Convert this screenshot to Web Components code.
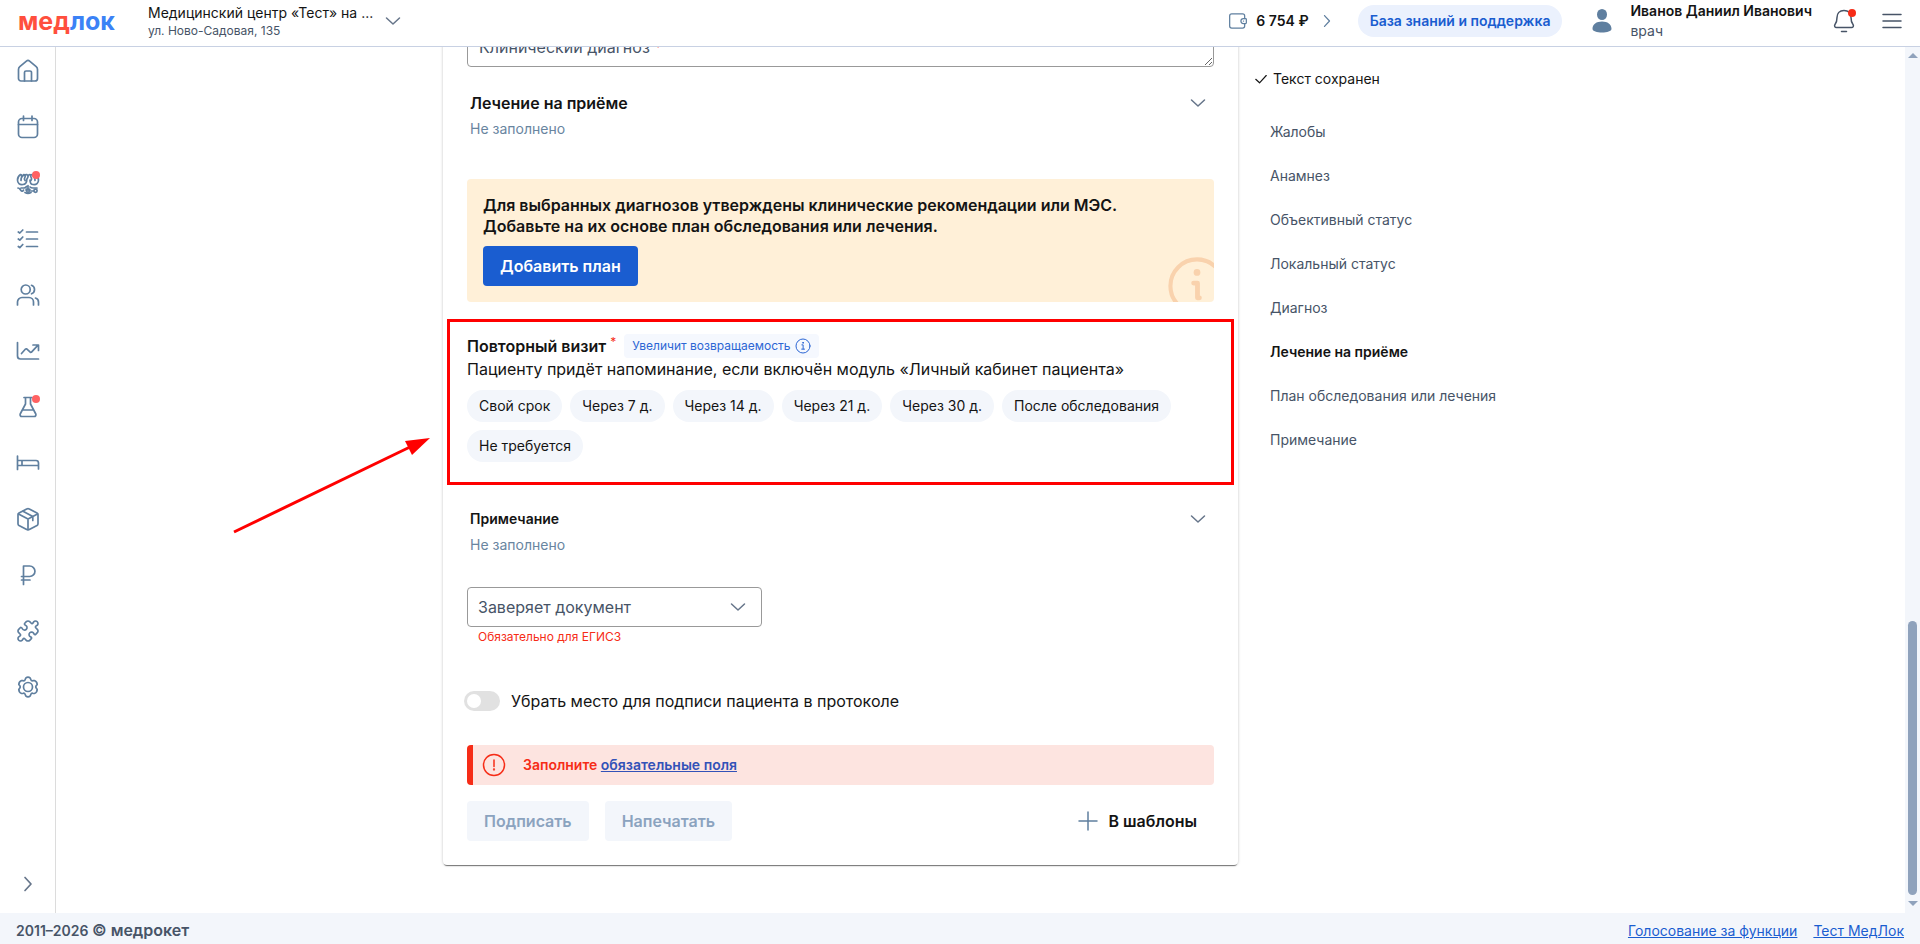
<!DOCTYPE html>
<html lang="ru">
<head>
<meta charset="utf-8">
<meta name="viewport" content="width=device-width, initial-scale=1">
<title>МедЛок</title>
<style>
    :root {
        --blue: #1a5dd0;
        --red: #f62c17;
        --steel: #5f7f9f;
        --slate: #475467;
        --chevron: #66758a;
        --pale: #f3f6fb;
        --mark: #ff0000;
    }
    html, body { height: 100%; }
    body {
        margin: 0;
        overflow: hidden;
        font: 14px/20px Inter, "Open Sans", sans-serif;
        color: #141414;
        background: #fff;
    }
</style>
</head>
<body>
<med-app></med-app>

<script>
const ICONS = {
    home: '<path d="M2.5 19.5V10.4c0-1.2.4-2 1.3-2.8l6.6-5.5c1-.8 2.2-.8 3.2 0l6.6 5.5c.9.8 1.3 1.6 1.3 2.8v9.1a2.5 2.5 0 0 1-2.5 2.5H5a2.5 2.5 0 0 1-2.5-2.5z"/><path d="M8.5 22v-8.500a1.500 1.500 0 0 1 1.500-1.500h4a1.500 1.500 0 0 1 1.500 1.500V22"/>',
    calendar: '<rect x="2.500" y="3.500" width="19" height="19" rx="3.500"/><path d="M2.500 9.500h19M7.500 1v4.500M16 1v4.500"/>',
    brain: '<path d="M7 13.500C3.500 14 1.500 12 1.500 9c0-2.500 1.200-4.300 3-5.500 1 .2 1.300.8 1 1.500M5 9.500c-.3-3 .9-4.300 3-6 1.500.2 1.700 1.200 1 2.500-.7 1.200-.8 2.500 0 3.500M8.500 4.500C10 3 12 3.500 12 5.500s-1.500 2-1.300 3.500c.3 2-1.200 4.500-3.700 4.500M17 13.500c3.500.5 5.500-1.500 5.500-4.500 0-2.500-1.200-4.300-3-5.500M19 9.500c.3-3-.9-4.300-3-6-1.500.2-1.700 1.200-1 2.500.7 1.200.8 2.500 0 3.500M12 5.500c.3-1.800 1.700-2.500 3-1.500M14 9c0 2.500 1 4.500 3 4.500"/><path d="M2 17c2 0 2 2 3.500 3 1 .5 1.700 0 2-1M5 17h3c1 0 2-.5 2.500-1.500M12 14.500v2.500M10 19c1-2 3-2 4 0M9 21.500c1.500.8 4.500.8 6 0M14 16c1 1 2 1 3 1h4"/><circle cx="12" cy="20" r="1.300"/><circle cx="19.500" cy="19.800" r="1.600"/><path d="M15 20h3"/>',
    list: '<path d="M10.500 5h11M10.500 12h11M10.500 19.500h11"/><path d="M2.300 5l1.500 1 3-3M2.300 12l1.500 1.200 3-3.200M2.300 19.500l1.500 1.200 3-3.200"/>',
    users: '<circle cx="9.700" cy="6.500" r="4.500"/><path d="M1.500 22v-3a4.500 4.500 0 0 1 4.500-4.500h7a4.500 4.500 0 0 1 4.500 4.500v3M15.500 2.300a4.500 4.500 0 0 1 0 8.500M19.500 15a4.300 4.300 0 0 1 3 4.200V22"/>',
    chart: '<path d="M1.500 3.500v13.500a3 3 0 0 0 3 3h18"/><path d="M5.500 14.500l4-4.500 1.200-.2 3.800 3.500 1-.1 6.500-7M17 6h5.500v5.500"/>',
    flask: '<path d="M8 2.500h8M9.500 2.500v6.500L4.200 19a1.800 1.800 0 0 0 1.600 2.500h12.400a1.800 1.800 0 0 0 1.600-2.500L14.500 9V2.500M7.500 15h9.500"/>',
    bed: '<path d="M1.500 5v13.500M1.500 14.500h21M1.500 9.500h18.500a2.500 2.500 0 0 1 2.500 2.500v6M6 9.500v5"/>',
    box: '<path d="M10.700 1.900a3 3 0 0 1 2.600 0l7.700 4.200a2 2 0 0 1 1 1.800v8.700a2 2 0 0 1-1 1.800l-7.700 4.200a3 3 0 0 1-2.600 0L3 18.400a2 2 0 0 1-1-1.800V7.900a2 2 0 0 1 1-1.800z"/><path d="M2.500 7l9.500 5 9.500-5M12 12v10.500M7 4.200l9.800 5.300v4"/>',
    ruble: '<path d="M7.500 21.500V3h6.200a5 5 0 0 1 0 10.500H5.500M5.500 17h8.500"/>',
    puzzle: '<path d="M19.439 7.850c-.049.322.059.648.289.878l1.568 1.568c.470.470.706 1.087.706 1.704s-.235 1.233-.706 1.704l-1.611 1.611a.980.980 0 0 1-.837.276c-.470-.070-.802-.480-.968-.925a2.501 2.501 0 1 0-3.214 3.214c.446.166.855.497.925.968a.979.979 0 0 1-.276.837l-1.610 1.610a2.404 2.404 0 0 1-1.705.707 2.402 2.402 0 0 1-1.704-.706l-1.568-1.568a1.026 1.026 0 0 0-.877-.290c-.493.074-.840.504-1.020.968a2.500 2.500 0 1 1-3.237-3.237c.464-.180.894-.527.967-1.020a1.026 1.026 0 0 0-.289-.877l-1.568-1.568A2.402 2.402 0 0 1 1.998 12c0-.617.236-1.234.706-1.704L4.230 8.770c.240-.240.581-.353.917-.303.515.077.877.528 1.073 1.010a2.500 2.500 0 1 0 3.259-3.259c-.482-.196-.933-.558-1.010-1.073-.050-.336.062-.676.303-.917l1.525-1.525A2.402 2.402 0 0 1 12 1.998c.617 0 1.234.236 1.704.706l1.568 1.568c.230.230.556.338.877.290.493-.074.840-.504 1.020-.968a2.500 2.500 0 1 1 3.237 3.237c-.464.180-.894.527-.967 1.020Z"/>',
    gear: '<circle cx="12" cy="12" r="4.500"/><path d="M9.700 2.200c1.400-1.200 3.200-1.200 4.600 0l.6 1.500c.3.800 1.100 1.200 1.900 1l1.600-.2c1.800.6 2.700 2.100 2.800 4l-1 1.300c-.5.700-.5 1.600 0 2.300l1 1.400c-.1 1.900-1 3.400-2.800 4l-1.600-.2c-.8-.2-1.600.2-1.900 1l-.6 1.500c-1.400 1.300-3.200 1.300-4.600 0l-.6-1.500c-.3-.8-1.100-1.200-1.900-1l-1.600.2c-1.800-.6-2.700-2.100-2.800-4l1-1.400c.5-.7.5-1.600 0-2.300l-1-1.300c.1-1.900 1-3.400 2.800-4l1.600.2c.8.200 1.600-.2 1.900-1z" transform="translate(0 1)"/>',
    right: '<path d="M9 5.500l6 6.500-6 6.500"/>',
    down: '<path d="M5.500 9l6.500 6 6.500-6"/>',
    wallet: '<path d="M20 9V6a2.500 2.500 0 0 0-2.500-2.500h-13A2.500 2.500 0 0 0 2 6v12a2.500 2.500 0 0 0 2.500 2.500h13A2.500 2.500 0 0 0 20 18v-3"/><path d="M18.500 9H21a1 1 0 0 1 1 1v4a1 1 0 0 1-1 1h-2.500a3 3 0 0 1 0-6zM18.500 12h.2"/>',
    user: '<g fill="currentColor" stroke="none"><ellipse cx="12" cy="5.500" rx="5" ry="5.500"/><path d="M12 12.500c5.500 0 9.500 2.800 9.500 7.300 0 2.500-4.500 3.700-9.500 3.700s-9.500-1.200-9.500-3.700c0-4.500 4-7.300 9.500-7.300z"/></g>',
    bell: '<path d="M12 1.500c-4.500 0-7 3-7 7 0 4-.7 5.500-2 7-.9 1.200-.3 3 1.500 3h15c1.800 0 2.400-1.800 1.500-3-1.300-1.500-2-3-2-7 0-4-2.500-7-7-7zM9.500 22.500h5"/>',
    menu: '<path d="M3 5.500h18M3 12h18M3 18.500h18"/>',
    check: '<path d="M3 12.500l6.500 6L21 6"/>',
    plus: '<path d="M12 3v18M3 12h18"/>',
    info: '<circle cx="12" cy="12" r="10.500"/><path d="M10.300 10.300h1.900v6.200M10 16.700h4.300"/><circle cx="12" cy="7.200" r=".7"/>',
    bigInfo: '<circle cx="12" cy="12" r="11"/><path d="M10.600 10.800h1.600v6M12.200 16.900h.8" stroke-width="2"/><circle cx="12" cy="6.400" r="1.400" fill="currentColor" stroke="none"/>',
    alert: '<circle cx="12" cy="12" r="10.500"/><path d="M12 7v6.500"/><circle cx="12" cy="16.500" r=".4"/>'
};

class MedIcon extends HTMLElement {
    constructor() {
        super();
        this.attachShadow({ mode: 'open' });
    }

    connectedCallback() {
        this.shadowRoot.innerHTML = /*html*/ `
        <style>
            :host {
                display: block;
                flex: none;
                width: var(--size, 24px);
                height: var(--size, 24px);
            }
            svg {
                display: block;
                width: 100%;
                height: 100%;
                fill: none;
                stroke: currentColor;
                stroke-width: var(--stroke, 1.5);
                stroke-linecap: round;
                stroke-linejoin: round;
            }
        </style>
        <svg viewBox="0 0 24 24" aria-hidden="true">${ICONS[this.getAttribute('name')] || ''}</svg>
        `;
    }
}
customElements.define('med-icon', MedIcon);

class MedButton extends HTMLElement {
    constructor() {
        super();
        this.attachShadow({ mode: 'open' });
    }

    connectedCallback() {
        const kind = this.getAttribute('kind') || 'primary';
        const disabled = this.hasAttribute('disabled') ? 'disabled' : '';
        this.shadowRoot.innerHTML = /*html*/ `
        <style>
            :host { display: block; }
            button {
                display: flex;
                align-items: center;
                gap: 8px;
                height: 40px;
                padding: 0 17px;
                border: 0;
                border-radius: 4px;
                font: 600 16px/24px Inter, sans-serif;
                white-space: nowrap;
                cursor: pointer;
            }
            .primary { background: var(--blue); color: #fff; }
            .muted { background: var(--pale); color: #8ba3bf; cursor: default; }
            .plain { background: none; color: #141414; }
            .chip {
                height: 32px;
                padding: 0 12px;
                border-radius: 16px;
                background: var(--pale);
                color: #141414;
                font: 14px/20px Inter, sans-serif;
            }
            .pill {
                height: 32px;
                padding: 0 12px;
                border-radius: 16px;
                background: #ebf1fd;
                color: var(--blue);
                font: 600 14px/20px Inter, sans-serif;
            }
        </style>
        <button type="button" class="${kind}" ${disabled}><slot name="icon"></slot><slot></slot></button>
        `;
    }
}
customElements.define('med-button', MedButton);

class MedHeader extends HTMLElement {
    constructor() {
        super();
        this.attachShadow({ mode: 'open' });
    }

    connectedCallback() {
        this.shadowRoot.innerHTML = /*html*/ `
        <style>
            :host {
                display: block;
                border-bottom: 1px solid #c8d1e3;
                background: #fff;
            }
            header {
                display: flex;
                align-items: center;
                height: 42px;
                padding: 0 16px 4px 18px;
            }
            button {
                display: flex;
                padding: 0;
                border: 0;
                background: none;
                color: inherit;
                font: inherit;
                text-align: left;
                cursor: pointer;
            }
            .logo {
                width: 130px;
                color: #ff4f3d;
                font: 700 25px/32px Inter, sans-serif;
                text-decoration: none;
            }
            .logo span { color: #3b82f6; }
            .clinic { align-items: center; gap: 8px; }
            .clinic med-icon { color: var(--chevron); }
            .clinic small { display: block; font-size: 12px; line-height: 16px; color: var(--slate); }
            .right { display: flex; align-items: center; margin-left: auto; }
            .wallet { align-items: center; gap: 8px; margin-right: 21px; font-weight: 600; }
            .wallet med-icon { color: var(--steel); --size: 20px; }
            .user { gap: 16px; align-items: center; margin: 0 20px 0 28px; }
            .user b { display: block; font-weight: 600; }
            .user span span { color: var(--slate); }
            .user med-icon { color: var(--steel); }
            .bell { position: relative; margin-right: 24px; color: var(--slate); }
            .bell::after {
                content: "";
                position: absolute;
                top: 0;
                right: 0;
                width: 8px;
                height: 8px;
                border-radius: 50%;
                background: var(--red);
            }
            .menu { color: var(--slate); }
        </style>
        <header>
            <a class="logo" href="#">мед<span>лок</span></a>
            <button class="clinic" type="button">
                <span>Медицинский центр «Тест» на ...<small>ул. Ново-Садовая, 135</small></span>
                <med-icon name="down"></med-icon>
            </button>
            <div class="right">
                <button class="wallet" type="button">
                    <med-icon name="wallet"></med-icon>6 754 ₽<med-icon name="right"></med-icon>
                </button>
                <med-button kind="pill">База знаний и поддержка</med-button>
                <button class="user" type="button">
                    <med-icon name="user"></med-icon>
                    <span><b>Иванов Даниил Иванович</b><span>врач</span></span>
                </button>
                <button class="bell" type="button" aria-label="Уведомления"><med-icon name="bell"></med-icon></button>
                <button class="menu" type="button" aria-label="Меню"><med-icon name="menu"></med-icon></button>
            </div>
        </header>
        `;
    }
}
customElements.define('med-header', MedHeader);

class MedSidebar extends HTMLElement {
    constructor() {
        super();
        this.attachShadow({ mode: 'open' });
        this._items = [
            ['home', 'Главная'], ['calendar', 'Расписание'], ['brain', 'Ассистент', true],
            ['list', 'Задачи'], ['users', 'Пациенты'], ['chart', 'Отчёты'],
            ['flask', 'Лаборатория', true], ['bed', 'Стационар'], ['box', 'Склад'],
            ['ruble', 'Финансы'], ['puzzle', 'Модули'], ['gear', 'Настройки']
        ];
    }

    connectedCallback() {
        this.shadowRoot.innerHTML = /*html*/ `
        <style>
            :host { display: block; border-right: 1px solid #dcdcdc; --stroke: 1.7; }
            nav {
                display: flex;
                flex-direction: column;
                align-items: center;
                gap: 32px;
                box-sizing: border-box;
                width: 55px;
                height: 100%;
                padding: 12px 0 17px;
            }
            a { position: relative; color: var(--steel); }
            a.dot::after {
                content: "";
                position: absolute;
                top: 0;
                right: 0;
                width: 8px;
                height: 8px;
                border-radius: 50%;
                background: #ff6262;
            }
            button { margin-top: auto; padding: 0; border: 0; background: none; color: var(--chevron); cursor: pointer; }
        </style>
        <nav>
            ${this._items.map(([icon, label, dot]) => `<a href="#" aria-label="${label}" class="${dot ? 'dot' : ''}"><med-icon name="${icon}"></med-icon></a>`).join('')}
            <button type="button" aria-label="Развернуть"><med-icon name="right"></med-icon></button>
        </nav>
        `;
    }
}
customElements.define('med-sidebar', MedSidebar);

class MedSection extends HTMLElement {
    constructor() {
        super();
        this.attachShadow({ mode: 'open' });
    }

    connectedCallback() {
        this.shadowRoot.innerHTML = /*html*/ `
        <style>
            :host { display: block; padding: 0 4px 0 3px; }
            button {
                display: flex;
                align-items: center;
                justify-content: space-between;
                width: 100%;
                padding: 0;
                border: 0;
                background: none;
                color: inherit;
                font: 600 var(--title-size, 16px)/24px Inter, sans-serif;
                cursor: pointer;
            }
            med-icon { color: var(--chevron); }
            p { margin: 4px 0 0; color: #69859f; }
        </style>
        <button type="button"><slot></slot><med-icon name="down"></med-icon></button>
        <p>Не заполнено</p>
        `;
    }
}
customElements.define('med-section', MedSection);

class MedNotice extends HTMLElement {
    constructor() {
        super();
        this.attachShadow({ mode: 'open' });
    }

    connectedCallback() {
        this.shadowRoot.innerHTML = /*html*/ `
        <style>
            :host {
                display: flex;
                flex-direction: column;
                align-items: flex-start;
                gap: 9px;
                position: relative;
                overflow: hidden;
                padding: 16px;
                border-radius: 4px;
                background: #fff0d8;
            }
            p { margin: 0; font: 600 16px/21px Inter, sans-serif; }
            /* oversized watermark cut by the corner */
            .watermark {
                position: absolute;
                right: -12px;
                bottom: -13px;
                color: #f9d2ad;
                --size: 58px;
                --stroke: 1.7;
            }
        </style>
        <p><slot></slot></p>
        <slot name="action"></slot>
        <med-icon class="watermark" name="bigInfo"></med-icon>
        `;
    }
}
customElements.define('med-notice', MedNotice);

class MedRevisit extends HTMLElement {
    constructor() {
        super();
        this.attachShadow({ mode: 'open' });
        this._terms = ['Свой срок', 'Через 7 д.', 'Через 14 д.', 'Через 21 д.', 'Через 30 д.', 'После обследования', 'Не требуется'];
    }

    connectedCallback() {
        this.shadowRoot.innerHTML = /*html*/ `
        <style>
            :host { display: block; position: relative; }
            :host::after {
                content: "";
                position: absolute;
                inset: -15px -20px -23px;
                border: 3px solid var(--mark);
                pointer-events: none;
            }
            .head { display: flex; align-items: center; gap: 8px; }
            h3 { margin: 0; font: 600 16px/24px Inter, sans-serif; }
            sup { color: var(--red); font: 12px/12px Inter, sans-serif; }
            .hint {
                display: flex;
                align-items: center;
                gap: 4px;
                height: 24px;
                padding: 0 8px;
                border-radius: 4px;
                background: #f5f8fe;
                color: #2c66d4;
                font-size: 12px;
                --size: 16px;
            }
            p { margin: 0 0 10px; font-size: 16px; line-height: 22px; }
            .terms { display: flex; flex-wrap: wrap; gap: 8px; }
        </style>
        <div class="head">
            <h3>Повторный визит <sup>*</sup></h3>
            <span class="hint">Увеличит возвращаемость <med-icon name="info"></med-icon></span>
        </div>
        <p>Пациенту придёт напоминание, если включён модуль «Личный кабинет пациента»</p>
        <div class="terms">
            ${this._terms.map(term => `<med-button kind="chip">${term}</med-button>`).join('')}
        </div>
        `;
    }
}
customElements.define('med-revisit', MedRevisit);

class MedProtocol extends HTMLElement {
    constructor() {
        super();
        this.attachShadow({ mode: 'open' });
    }

    connectedCallback() {
        this.shadowRoot.innerHTML = /*html*/ `
        <style>
            :host {
                display: flex;
                flex-direction: column;
                padding: 24px;
                border-radius: 4px;
                background: #fff;
                box-shadow: 0 2px 1px -1px rgba(0, 0, 0, .5), 0 0 3px rgba(0, 0, 0, .25);
            }
            .diagnosis { display: grid; margin-bottom: 24px; }
            .diagnosis > * { grid-area: 1 / 1; }
            .diagnosis label {
                z-index: 1;
                padding: 8px 12px;
                color: var(--slate);
                font-size: 16px;
                line-height: 24px;
                pointer-events: none;
            }
            .diagnosis i { color: var(--red); font-style: normal; }
            textarea, select {
                box-sizing: border-box;
                width: 100%;
                height: 40px;
                padding: 0 11px;
                border: 1px solid #999;
                border-radius: 4px;
                background: #fff;
                font: 16px/24px Inter, sans-serif;
            }
            textarea { resize: vertical; }
            med-notice { margin: 40px 0 32px; }
            med-revisit { margin-bottom: 45px; }
            .note { --title-size: 14px; }
            .signer { width: 295px; margin: 32px 0 44px; }
            .select { display: grid; align-items: center; }
            .select > * { grid-area: 1 / 1; }
            .select med-icon { justify-self: end; margin-right: 12px; color: var(--chevron); pointer-events: none; }
            select { appearance: none; padding: 0 10px; color: var(--slate); }
            .signer small { display: block; padding: 2px 11px 0; color: var(--red); font-size: 12px; line-height: 16px; }
            .toggle { display: flex; align-items: center; gap: 11px; margin: 0 0 32px -3px; font-size: 16px; line-height: 24px; }
            .toggle input {
                appearance: none;
                box-sizing: border-box;
                width: 36px;
                height: 20px;
                margin: 0;
                padding: 3px;
                border-radius: 10px;
                background: #e1e1e1;
            }
            .toggle input::before {
                content: "";
                display: block;
                width: 14px;
                height: 14px;
                border-radius: 50%;
                background: #fff;
            }
            .alert {
                display: flex;
                align-items: center;
                height: 40px;
                padding-left: 9px;
                border-left: 6px solid var(--red);
                border-radius: 4px;
                background: #fde4e0;
                color: var(--red);
                font-weight: 600;
            }
            .alert med-icon { margin-right: 17px; }
            .alert a { color: #3352b8; }
            .actions { display: flex; gap: 16px; margin-top: 16px; }
            .actions [kind=plain] { margin-left: auto; }
            .actions med-icon { color: var(--steel); }
        </style>
        <div class="diagnosis">
            <label for="diagnosis">Клинический диагноз <i>*</i></label>
            <textarea id="diagnosis"></textarea>
        </div>
        <med-section>Лечение на приёме</med-section>
        <med-notice>
            Для выбранных диагнозов утверждены клинические рекомендации или МЭС.<br>
            Добавьте на их основе план обследования или лечения.
            <med-button slot="action">Добавить план</med-button>
        </med-notice>
        <med-revisit></med-revisit>
        <med-section class="note">Примечание</med-section>
        <div class="signer">
            <div class="select">
                <select aria-label="Заверяет документ"><option>Заверяет документ</option></select>
                <med-icon name="down"></med-icon>
            </div>
            <small>Обязательно для ЕГИСЗ</small>
        </div>
        <label class="toggle"><input type="checkbox" role="switch">Убрать место для подписи пациента в протоколе</label>
        <div class="alert" role="alert">
            <med-icon name="alert"></med-icon>
            <span>Заполните <a href="#">обязательные поля</a></span>
        </div>
        <div class="actions">
            <med-button kind="muted" disabled>Подписать</med-button>
            <med-button kind="muted" disabled>Напечатать</med-button>
            <med-button kind="plain"><med-icon slot="icon" name="plus"></med-icon>В шаблоны</med-button>
        </div>
        `;
    }
}
customElements.define('med-protocol', MedProtocol);

class MedContents extends HTMLElement {
    constructor() {
        super();
        this.attachShadow({ mode: 'open' });
        this._links = ['Жалобы', 'Анамнез', 'Объективный статус', 'Локальный статус', 'Диагноз', 'Лечение на приёме', 'План обследования или лечения', 'Примечание'];
        this._current = 5;
    }

    connectedCallback() {
        this.shadowRoot.innerHTML = /*html*/ `
        <style>
            :host { display: block; padding: 22px 16px; }
            p { display: flex; align-items: center; gap: 5px; margin: 0 0 21px; --size: 14px; --stroke: 2; }
            nav { display: flex; flex-direction: column; align-items: flex-start; padding-left: 16px; }
            a { padding: 12px 0; color: var(--slate); text-decoration: none; }
            a[aria-current] { color: #141414; font-weight: 600; }
        </style>
        <p><med-icon name="check"></med-icon>Текст сохранен</p>
        <nav>
            ${this._links.map((link, i) => `<a href="#" ${i === this._current ? 'aria-current="true"' : ''}>${link}</a>`).join('')}
        </nav>
        `;
    }
}
customElements.define('med-contents', MedContents);

class MedScrollbar extends HTMLElement {
    constructor() {
        super();
        this.attachShadow({ mode: 'open' });
    }

    connectedCallback() {
        this.shadowRoot.innerHTML = /*html*/ `
        <style>
            :host {
                display: flex;
                flex-direction: column;
                align-items: center;
                gap: 6px;
                box-sizing: border-box;
                width: 15px;
                padding: 6px 3px 7px;
                background: var(--pale);
            }
            .up, .down { border: solid transparent; border-width: 0 5px 5px; border-bottom-color: #8fa2bc; }
            .down { border-width: 5px 5px 0; border-top-color: #8fa2bc; }
            .track { display: flex; flex: 1; align-items: flex-end; }
            .thumb { width: 9px; height: 33%; border-radius: 5px; background: #8fa2bc; }
        </style>
        <div class="up"></div>
        <div class="track"><div class="thumb"></div></div>
        <div class="down"></div>
        `;
    }
}
customElements.define('med-scrollbar', MedScrollbar);

class MedFooter extends HTMLElement {
    constructor() {
        super();
        this.attachShadow({ mode: 'open' });
    }

    connectedCallback() {
        this.shadowRoot.innerHTML = /*html*/ `
        <style>
            :host { display: block; background: var(--pale); }
            footer { display: flex; align-items: center; gap: 16px; padding: 8px 16px 3px; }
            span { margin-right: auto; color: var(--slate); font-weight: 600; }
            b { font-size: 16px; line-height: 16px; font-weight: 600; }
            a { color: var(--blue); }
        </style>
        <footer>
            <span>2011–2026 <b>© медрокет</b></span>
            <a href="#">Голосование за функции</a>
            <a href="#">Тест МедЛок</a>
        </footer>
        `;
    }
}
customElements.define('med-footer', MedFooter);

class MedApp extends HTMLElement {
    constructor() {
        super();
        this.attachShadow({ mode: 'open' });
    }

    connectedCallback() {
        this.shadowRoot.innerHTML = /*html*/ `
        <style>
            :host { display: flex; flex-direction: column; height: 100%; }
            .body { display: flex; flex: 1; min-height: 0; }
            main {
                display: grid;
                grid-template-columns: 387fr 795fr 667fr;
                grid-template-rows: minmax(0, 1fr);
                position: relative;
                flex: 1;
                overflow: hidden;
            }
            /* the protocol is scrolled down to its end */
            med-protocol { grid-column: 2; align-self: end; margin-bottom: 48px; }
            .arrow { position: absolute; left: 176px; top: 388px; }
        </style>
        <med-header></med-header>
        <div class="body">
            <med-sidebar></med-sidebar>
            <main>
                <med-protocol></med-protocol>
                <med-contents></med-contents>
                <svg class="arrow" width="200" height="100" aria-hidden="true">
                    <path d="M2 97L178 12" stroke="#f00" stroke-width="3"/>
                    <path d="M198 3L173 6L180 20z" fill="#f00"/>
                </svg>
            </main>
            <med-scrollbar></med-scrollbar>
        </div>
        <med-footer></med-footer>
        `;
    }
}
customElements.define('med-app', MedApp);
</script>
</body>
</html>
